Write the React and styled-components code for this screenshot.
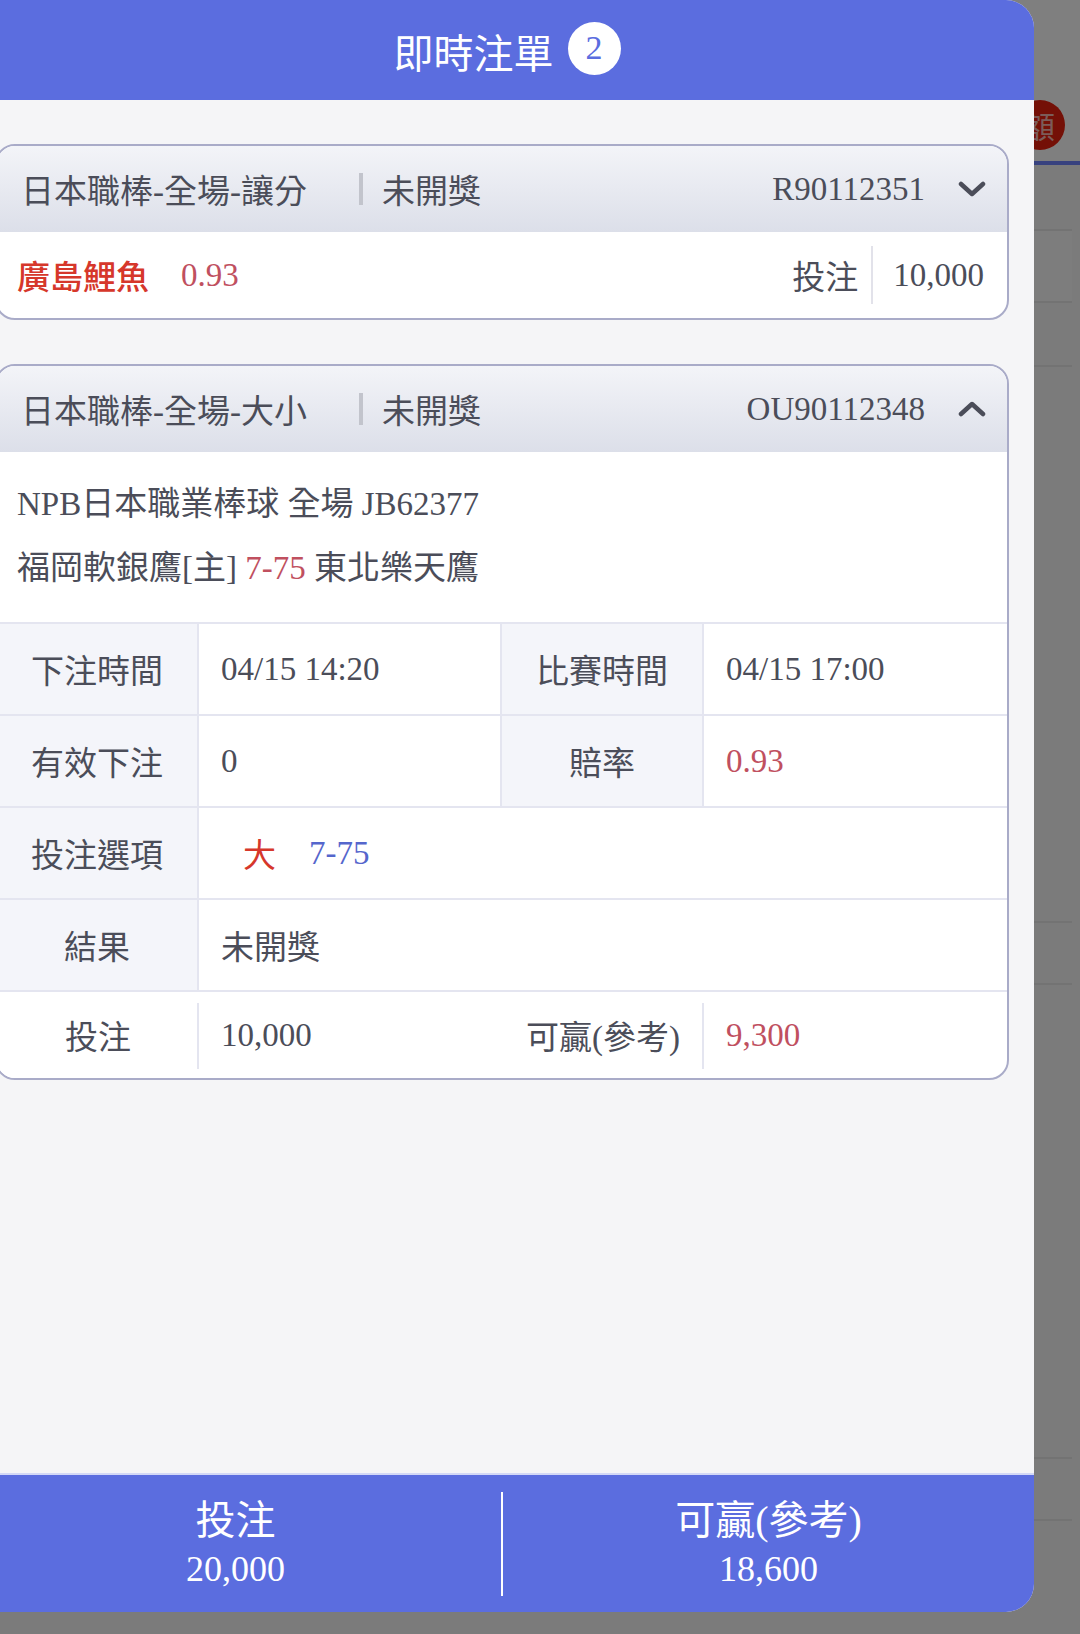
import React from "react";
import styled, { createGlobalStyle } from "styled-components";

const FONT = `"Liberation Serif", "Noto Sans CJK TC", serif`;
const BLUE = "#5b6ddf";
const TEXT = "#4b4d59";
const ROSE = "#c0505f";
const RED = "#d6372b";
const LINE = "#e4e5f0";

const GlobalStyle = createGlobalStyle`
  html, body {
    margin: 0;
    padding: 0;
    background: #808080;
  }
  * {
    box-sizing: border-box;
  }
`;

export default function App() {
  return (
    <>
      <GlobalStyle />
      <Screen>
        <BackPage>
          <BackTop>
            <RedDot>額</RedDot>
          </BackTop>
          <BlueRule />
          <BackRow $h={66} />
          <BackRow $h={72} $box />
          <BackRow $h={64} />
          <BackRow $h={556} />
          <BackRow $h={62} />
          <BackRow $h={474} />
          <BackRow $h={62} />
        </BackPage>
        <Dim />
        <Drawer>
          <DrawerHeader>
            <HeaderTitle>即時注單</HeaderTitle>
            <CountBadge>2</CountBadge>
          </DrawerHeader>

          <DrawerBody>
            <Card>
              <CardHead>
                <HeadTitle>日本職棒-全場-讓分</HeadTitle>
                <HeadBar />
                <HeadStatus>未開獎</HeadStatus>
                <HeadId>R90112351</HeadId>
                <Chevron up={false} />
              </CardHead>
              <SummaryRow>
                <TeamName>廣島鯉魚</TeamName>
                <Odds>0.93</Odds>
                <StakeLabel>投注</StakeLabel>
                <StakeDivider />
                <StakeValue>10,000</StakeValue>
              </SummaryRow>
            </Card>

            <Card>
              <CardHead>
                <HeadTitle>日本職棒-全場-大小</HeadTitle>
                <HeadBar />
                <HeadStatus>未開獎</HeadStatus>
                <HeadId>OU90112348</HeadId>
                <Chevron up />
              </CardHead>
              <MatchInfo>
                <InfoLine>NPB日本職業棒球 全場 JB62377</InfoLine>
                <InfoLine>
                  福岡軟銀鷹[主] <Tone $c={ROSE}>7-75</Tone> 東北樂天鷹
                </InfoLine>
              </MatchInfo>
              <DetailTable>
                <Label>下注時間</Label>
                <Value $divide>04/15 14:20</Value>
                <Label>比賽時間</Label>
                <Value>04/15 17:00</Value>

                <Label>有效下注</Label>
                <Value $divide>0</Value>
                <Label>賠率</Label>
                <Value $c={ROSE}>0.93</Value>

                <Label>投注選項</Label>
                <Value $span>
                  <Pick>大</Pick>
                  <Tone $c="#5566cc">7-75</Tone>
                </Value>

                <Label>結果</Label>
                <Value $span>未開獎</Value>

                <Label $plain>投注</Label>
                <Value $plain>10,000</Value>
                <Label $plain>可贏(參考)</Label>
                <Value $c={ROSE}>9,300</Value>
              </DetailTable>
            </Card>
          </DrawerBody>

          <DrawerFooter>
            <FooterHalf>
              <FooterLabel>投注</FooterLabel>
              <FooterValue>20,000</FooterValue>
            </FooterHalf>
            <FooterDivider />
            <FooterHalf>
              <FooterLabel>可贏(參考)</FooterLabel>
              <FooterValue>18,600</FooterValue>
            </FooterHalf>
          </DrawerFooter>
        </Drawer>
      </Screen>
    </>
  );
}

const Chevron = ({ up }) => (
  <ChevronIcon viewBox="0 0 28 16" $up={up}>
    <path
      d="M3 3 L14 13 L25 3"
      fill="none"
      stroke={TEXT}
      strokeWidth="4.5"
      strokeLinecap="round"
      strokeLinejoin="round"
    />
  </ChevronIcon>
);

const Screen = styled.div`
  position: relative;
  width: 1080px;
  height: 1634px;
  overflow: hidden;
  font-family: ${FONT};
`;

/* page underneath the drawer */
const BackPage = styled.div`
  width: 100%;
  height: 100%;
  background: #f6f6f6;
`;
const BackTop = styled.div`
  height: 161px;
  background: #ffffff;
  display: flex;
  align-items: flex-end;
  justify-content: flex-end;
  padding: 0 15px 11px 0;
`;
const RedDot = styled.div`
  width: 50px;
  height: 50px;
  border-radius: 50%;
  background: #e8200e;
  box-shadow: 0 0 0 3px rgba(255, 255, 255, 0.35);
  color: rgba(255, 255, 255, 0.7);
  font-size: 30px;
  display: flex;
  align-items: center;
  justify-content: center;
`;
const BlueRule = styled.div`
  height: 4px;
  background: #7085ff;
`;
const BackRow = styled.div`
  height: ${(p) => p.$h}px;
  border-bottom: 2px solid #e6e6e6;
  margin-right: 8px;
  background: ${(p) => (p.$box ? "#fafafa" : "transparent")};
`;
const Dim = styled.div`
  position: absolute;
  inset: 0;
  background: rgba(0, 0, 0, 0.5);
`;

/* drawer */
const Drawer = styled.div`
  position: absolute;
  top: 0;
  left: -30px;
  width: 1064px;
  height: 1612px;
  display: flex;
  flex-direction: column;
  background: #f5f5f7;
  border-radius: 0 28px 28px 0;
  overflow: hidden;
`;
const DrawerHeader = styled.div`
  height: 100px;
  flex: 0 0 auto;
  background: ${BLUE};
  display: flex;
  align-items: center;
  justify-content: center;
  gap: 14px;
  padding-left: 10px;
`;
const HeaderTitle = styled.span`
  color: #fff;
  font-family: "Noto Sans CJK TC", sans-serif;
  font-size: 40px;
  line-height: 1;
  margin-top: 2px;
`;
const CountBadge = styled.span`
  width: 53px;
  height: 53px;
  border-radius: 50%;
  background: #fff;
  color: ${BLUE};
  font-family: "Liberation Serif", serif;
  font-size: 34px;
  display: flex;
  align-items: center;
  justify-content: center;
  margin-top: -4px;
`;
const DrawerBody = styled.div`
  flex: 1;
  display: flex;
  flex-direction: column;
  gap: 44px;
  padding: 44px 25px 0;
`;

/* bet card */
const Card = styled.div`
  border: 2px solid #a9abc8;
  border-radius: 20px;
  background: #fff;
  overflow: hidden;
`;
const CardHead = styled.div`
  height: 86px;
  display: flex;
  align-items: center;
  padding: 0 21px 0 24px;
  background: linear-gradient(180deg, #f3f4f8 0%, #dcdfe9 100%);
  color: ${TEXT};
  font-size: 33px;
`;
const HeadTitle = styled.span`
  flex: 0 0 338px;
  white-space: nowrap;
`;
const HeadBar = styled.span`
  width: 4px;
  height: 32px;
  background: #c2c4cc;
  margin-right: 19px;
`;
const HeadStatus = styled.span``;
const HeadId = styled.span`
  margin-left: auto;
`;
const ChevronIcon = styled.svg`
  width: 28px;
  height: 16px;
  margin-left: 33px;
  transform: ${(p) => (p.$up ? "rotate(180deg)" : "none")};
`;

const SummaryRow = styled.div`
  height: 86px;
  display: flex;
  align-items: center;
  padding: 0 23px 0 20px;
  font-size: 33px;
  color: ${TEXT};
`;
const TeamName = styled.span`
  color: ${RED};
  font-weight: 500;
`;
const Odds = styled.span`
  color: ${ROSE};
  margin-left: 32px;
`;
const StakeLabel = styled.span`
  margin-left: auto;
`;
const StakeDivider = styled.span`
  width: 2px;
  height: 58px;
  background: #e2e2ea;
  margin: 0 20px 0 13px;
`;
const StakeValue = styled.span``;

const MatchInfo = styled.div`
  padding: 20px 20px 22px;
  color: ${TEXT};
  font-size: 33px;
`;
const InfoLine = styled.div`
  line-height: 64px;
  white-space: nowrap;
`;
const Tone = styled.span`
  color: ${(p) => p.$c};
`;
const Pick = styled.span`
  color: ${RED};
  margin: 0 33px 0 22px;
`;

const DetailTable = styled.div`
  display: grid;
  grid-template-columns: 20% 30% 20% 30%;
  grid-template-rows: repeat(4, 92px) 88px;
  font-size: 33px;
  color: ${TEXT};
`;
const Label = styled.div`
  position: relative;
  display: flex;
  align-items: center;
  justify-content: center;
  border-top: 2px solid ${LINE};
  border-right: ${(p) => (p.$plain ? "none" : `2px solid ${LINE}`)};
  background: ${(p) => (p.$plain ? "#fff" : "#f4f5fa")};
  white-space: nowrap;

  ${(p) =>
    p.$plain &&
    `
    &::after {
      content: "";
      position: absolute;
      right: 0;
      top: 11px;
      bottom: 9px;
      width: 2px;
      background: ${LINE};
    }
  `}
`;
const Value = styled.div`
  position: relative;
  display: flex;
  align-items: center;
  padding-left: 22px;
  border-top: 2px solid ${LINE};
  border-right: ${(p) => (p.$divide ? `2px solid ${LINE}` : "none")};
  grid-column: ${(p) => (p.$span ? "span 3" : "auto")};
  color: ${(p) => p.$c || TEXT};
  white-space: nowrap;
`;

/* footer totals */
const DrawerFooter = styled.div`
  height: 139px;
  flex: 0 0 auto;
  display: flex;
  align-items: center;
  background: ${BLUE};
  border-top: 2px solid #d3d8f6;
`;
const FooterHalf = styled.div`
  flex: 1;
  display: flex;
  flex-direction: column;
  align-items: center;
  color: #fff;
`;
const FooterLabel = styled.span`
  font-size: 40px;
  line-height: 50px;
`;
const FooterValue = styled.span`
  font-size: 36px;
  line-height: 46px;
`;
const FooterDivider = styled.span`
  width: 2px;
  height: 104px;
  background: #fff;
`;
